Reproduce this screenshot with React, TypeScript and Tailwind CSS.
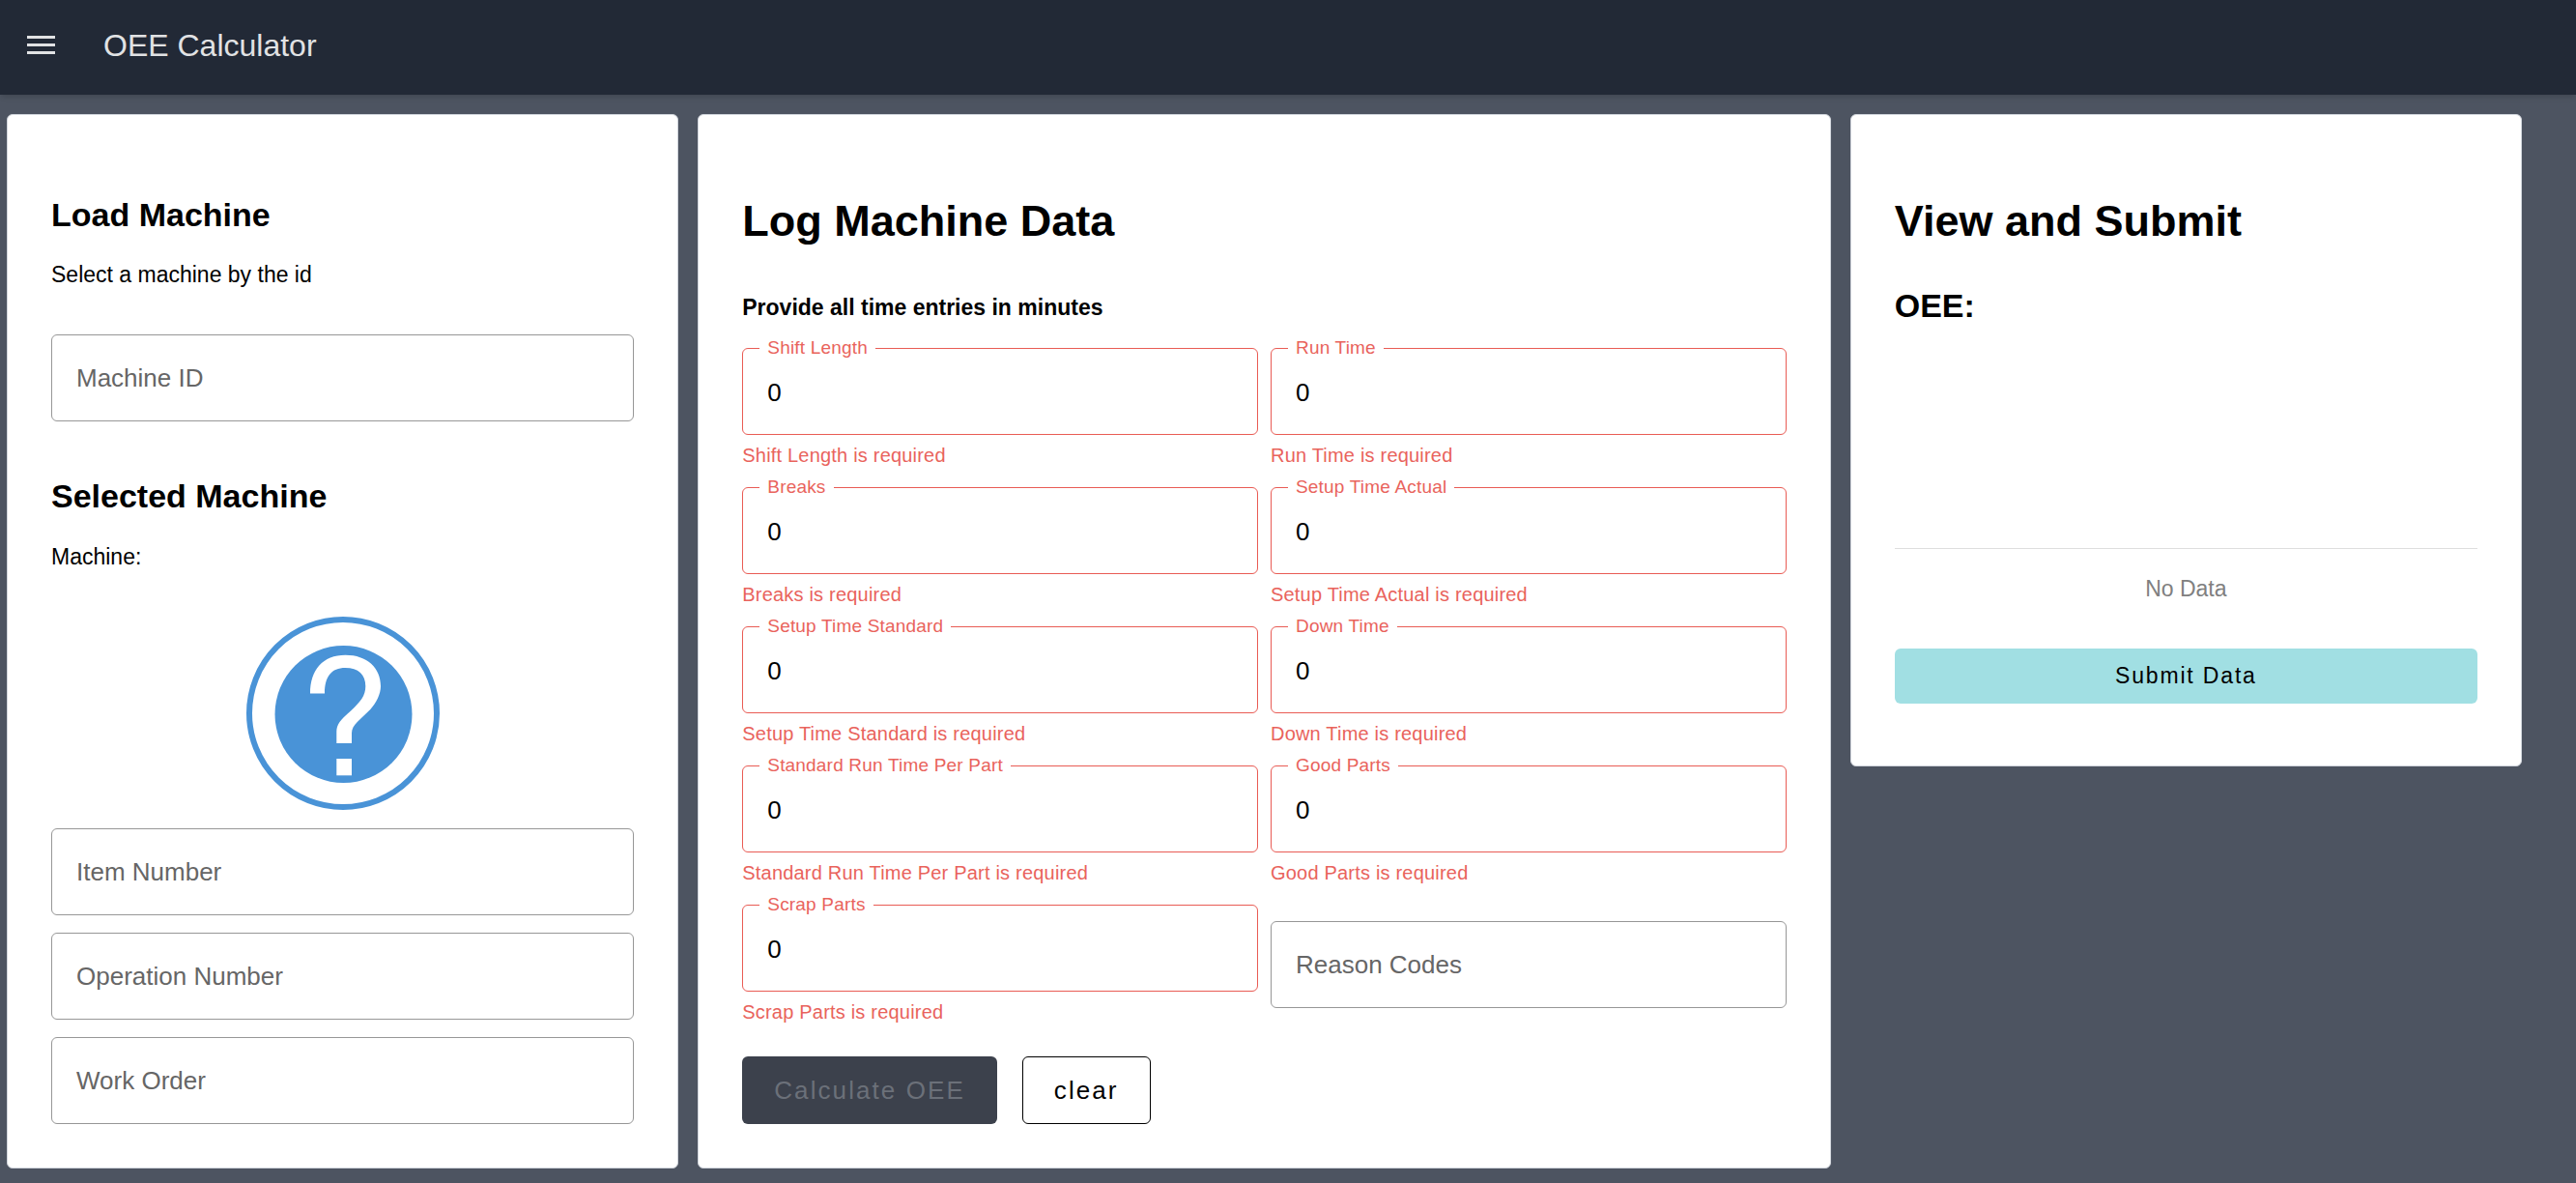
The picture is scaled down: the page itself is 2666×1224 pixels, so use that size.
import React, { useState } from "react";

const cardClass =
  "rounded-md border border-gray-300 bg-white p-[45px]";

function HelpBadge() {
  return (
    <svg
      viewBox="0 0 200 200"
      className="mx-auto mt-[46px] size-[200px]"
      role="img"
      aria-label="Unknown machine"
    >
      <circle cx="100" cy="100" r="97" fill="none" stroke="#4993d7" strokeWidth="6" />
      <circle cx="100.5" cy="101" r="71" fill="#4993d7" />
      <path
        fill="#fff"
        d="M66 79.500C66 55 79 39.700 102.500 39.700C125 39.700 139 53 139 72C139 80 134.500 89 128.300 96L115 108.700C111 113 109 116 109 120.500V131H93.300V119C93.300 112 97 107 108.300 97.300C118 88 123.300 82 123.300 72C123.300 60 116 53 102.300 53C88 53 81 62 81 79.500Z"
      />
      <rect x="93.300" y="147" width="15.700" height="17.300" fill="#fff" />
    </svg>
  );
}

function PlainField({ id, label }: { id: string; label: string }) {
  const [value, setValue] = useState("");
  return (
    <div className="relative">
      <input
        id={id}
        value={value}
        onChange={(e) => setValue(e.target.value)}
        className="block h-[90px] w-full rounded-md border border-[#979797] bg-white px-[25px] text-[26px] text-black"
      />
      <label
        htmlFor={id}
        className={
          value
            ? "sr-only"
            : "pointer-events-none absolute inset-0 flex items-center px-[26px] text-[26px] text-[#666666]"
        }
      >
        {label}
      </label>
    </div>
  );
}

function RequiredField({ id, label }: { id: string; label: string }) {
  return (
    <div>
      <div className="relative">
        <input
          id={id}
          defaultValue="0"
          required
          aria-describedby={`${id}-help`}
          className="block h-[90px] w-full rounded-md border border-[#e95c55] bg-white px-[25px] pt-[3px] text-[26px] text-black"
        />
        <label
          htmlFor={id}
          className="absolute -top-3 left-[18px] bg-white px-2 text-[19px] leading-6 tracking-[0.01em] text-[#e9635c]"
        >
          {label}
        </label>
      </div>
      <p
        id={`${id}-help`}
        className="mt-[9px] mb-px text-[20px] leading-6 tracking-[0.01em] text-[#e9635c]"
      >
        {label} is required
      </p>
    </div>
  );
}

const entries = [
  { id: "shift-length", label: "Shift Length" },
  { id: "run-time", label: "Run Time" },
  { id: "breaks", label: "Breaks" },
  { id: "setup-actual", label: "Setup Time Actual" },
  { id: "setup-standard", label: "Setup Time Standard" },
  { id: "down-time", label: "Down Time" },
  { id: "standard-run", label: "Standard Run Time Per Part" },
  { id: "good-parts", label: "Good Parts" },
  { id: "scrap-parts", label: "Scrap Parts" },
];

export default function App() {
  return (
    <div className="min-h-screen bg-[#4d5461] font-['Liberation_Sans',Arial,sans-serif] text-black">
      <header className="flex h-[98px] items-center bg-[#222936] pb-1 pl-7 text-[#e1e2e4] shadow-md">
        <button type="button" aria-label="Open menu" className="mr-[50px]">
          <svg viewBox="0 0 29 20" className="h-5 w-[29px]" fill="currentColor">
            <rect width="29" height="3" />
            <rect y="8" width="29" height="3" />
            <rect y="16" width="29" height="3" />
          </svg>
        </button>
        <h1 className="text-[32px] leading-10">OEE Calculator</h1>
      </header>

      <main className="grid grid-cols-[695fr_1172fr_695fr] items-start gap-5 pt-5 pr-14 pb-4 pl-[7px]">
        <section className={cardClass}>
          <h2 className="mt-[38px] text-[34px] leading-10 font-bold">Load Machine</h2>
          <p className="mt-[26px] mb-[46px] text-[23px] leading-8">Select a machine by the id</p>
          <PlainField id="machine-id" label="Machine ID" />
          <h2 className="mt-[57px] text-[34px] leading-10 font-bold">Selected Machine</h2>
          <p className="mt-[27px] text-[23px] leading-8">Machine:</p>
          <HelpBadge />
          <div className="mt-[19px] grid gap-[18px]">
            <PlainField id="item-number" label="Item Number" />
            <PlainField id="operation-number" label="Operation Number" />
            <PlainField id="work-order" label="Work Order" />
          </div>
        </section>

        <form className={cardClass} onSubmit={(e) => e.preventDefault()} noValidate>
          <h2 className="mt-[38px] text-[45px] leading-[54px] font-bold">Log Machine Data</h2>
          <p className="mt-[46px] text-[23px] leading-8 font-bold">
            Provide all time entries in minutes
          </p>
          <div className="mt-[26px] grid grid-cols-2 gap-x-[13px] gap-y-5">
            {entries.map((entry) => (
              <RequiredField key={entry.id} id={entry.id} label={entry.label} />
            ))}
            <div className="self-center">
              <PlainField id="reason-codes" label="Reason Codes" />
            </div>
          </div>
          <div className="mt-[33px] flex gap-[26px]">
            <button
              type="submit"
              disabled
              className="h-[70px] rounded-md bg-[#3c414c] px-[33px] text-[26px] tracking-[0.08em] text-[#6b7079]"
            >
              Calculate OEE
            </button>
            <button
              type="reset"
              className="h-[70px] rounded-md border border-black px-8 text-[26px] tracking-[0.08em]"
            >
              clear
            </button>
          </div>
        </form>

        <section className={cardClass}>
          <h2 className="mt-[38px] text-[45px] leading-[54px] font-bold">View and Submit</h2>
          <h3 className="mt-10 text-[34px] leading-10 font-bold">OEE:</h3>
          <p className="mt-[231px] border-t border-[#dedede] pt-[25px] text-center text-[23px] leading-8 text-[#808080]">
            No Data
          </p>
          <button
            type="button"
            className="mt-[46px] mb-[19px] h-[57px] w-full rounded-md bg-[#a1dfe3] text-[23px] tracking-[0.08em]"
          >
            Submit Data
          </button>
        </section>
      </main>
    </div>
  );
}
